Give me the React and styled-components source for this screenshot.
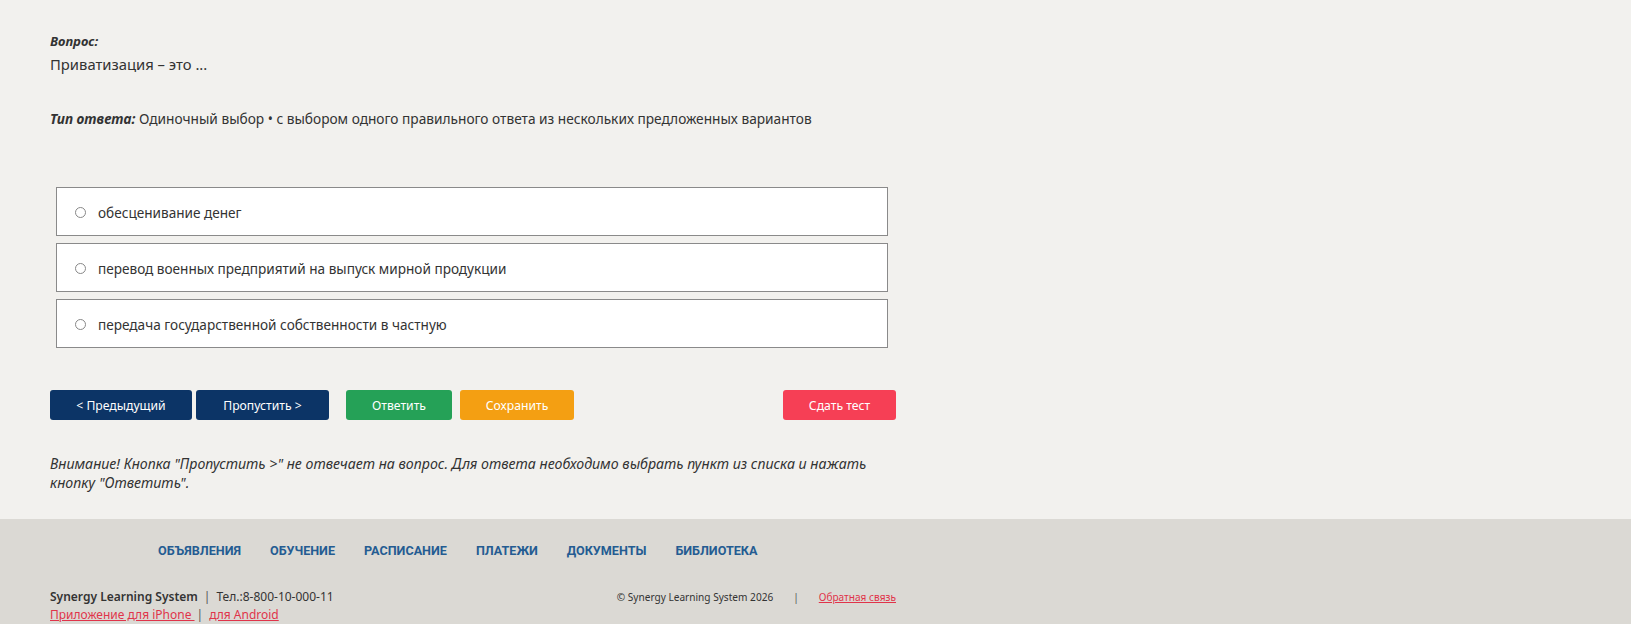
import React from 'react';
import styled, { createGlobalStyle } from 'styled-components';

const GlobalStyle = createGlobalStyle`
    html, body {
        margin: 0;
        padding: 0;
        background: #f2f1ee;
    }
    body {
        font-family: 'Noto Sans', 'Open Sans', sans-serif;
        color: #333;
    }
`;

const Page = styled.div`
    min-height: 624px;
    display: flex;
    flex-direction: column;
`;

const Main = styled.main`
    width: 846px;
    padding: 32px 0 0 50px;
    box-sizing: content-box;
`;

const Label = styled.div`
    font-size: 13px;
    font-weight: 700;
    font-style: italic;
    line-height: 19px;
    color: #333;
`;

const Question = styled.div`
    font-size: 14.8px;
    line-height: 20px;
    margin-top: 3px;
    color: #333;
`;

const AnswerType = styled.div`
    margin-top: 35px;
    font-size: 13.7px;
    line-height: 20px;
    color: #333;

    b {
        font-weight: 700;
        font-style: italic;
    }
`;

const Options = styled.div`
    margin: 58px 8px 0 6px;
    display: flex;
    flex-direction: column;
    gap: 7px;
`;

const Option = styled.label`
    display: flex;
    align-items: center;
    gap: 12px;
    height: 45px;
    padding: 2px 18px 0;
    box-sizing: content-box;
    background: #fff;
    border: 1px solid #8a8a8a;
    font-size: 13.6px;
    color: #333;
    cursor: pointer;
`;

const Radio = styled.span`
    width: 9px;
    height: 9px;
    border-radius: 50%;
    border: 1px solid #888;
    background: #fff;
    flex-shrink: 0;
`;

const Toolbar = styled.div`
    display: flex;
    align-items: center;
    margin-top: 42px;
`;

const Button = styled.button`
    font-family: 'Noto Sans', 'Open Sans', sans-serif;
    height: 30px;
    width: ${(p) => p.$w}px;
    margin-left: ${(p) => p.$ml || 0}px;
    background: ${(p) => p.$bg};
    color: #fff;
    border: none;
    border-radius: 3px;
    font-size: 12.2px;
    padding: 0;
    cursor: pointer;
`;

const Spacer = styled.div`
    flex: 1;
`;

const Notice = styled.p`
    margin: 34px 0 27px;
    font-size: 14.2px;
    font-style: italic;
    line-height: 19px;
    color: #333;
`;

const Footer = styled.footer`
    flex: 1;
    background: #dbd9d4;
    padding: 0 0 0 50px;
`;

const FooterInner = styled.div`
    width: 846px;
`;

const Nav = styled.nav`
    display: flex;
    gap: 29px;
    padding: 23px 0 0 108px;
    height: 40px;
    box-sizing: border-box;
`;

const NavLink = styled.a`
    font-family: 'Roboto', sans-serif;
    font-weight: 700;
    font-size: 12.6px;
    line-height: 17px;
    color: #245c92;
    text-decoration: none;
`;

const Bottom = styled.div`
    display: flex;
    justify-content: space-between;
    margin-top: 29px;
    font-size: 12px;
    line-height: 18px;
    color: #333;
`;

const Col = styled.div`
    display: flex;
    flex-direction: column;
`;

const Strong = styled.span`
    font-weight: 600;
`;

const Sep = styled.span`
    margin: 0 6px 0 ${(p) => (p.$tight ? 2 : 6)}px;
    color: #555;
`;

const Link = styled.a`
    color: #e0344a;
    text-decoration: underline;
`;

const Copy = styled.div`
    font-size: 10.1px;
    line-height: 18px;
    color: #333;

    ${Sep} {
        margin: 0 20px;
    }
`;

const options = [
    'обесценивание денег',
    'перевод военных предприятий на выпуск мирной продукции',
    'передача государственной собственности в частную',
];

const nav = ['ОБЪЯВЛЕНИЯ', 'ОБУЧЕНИЕ', 'РАСПИСАНИЕ', 'ПЛАТЕЖИ', 'ДОКУМЕНТЫ', 'БИБЛИОТЕКА'];

export default function App() {
    return (
        <Page>
            <GlobalStyle />
            <Main>
                <Label>Вопрос:</Label>
                <Question>Приватизация – это ...</Question>
                <AnswerType>
                    <b>Тип ответа:</b> Одиночный выбор • с выбором одного правильного ответа из
                    нескольких предложенных вариантов
                </AnswerType>
                <Options>
                    {options.map((o) => (
                        <Option key={o}>
                            <Radio />
                            {o}
                        </Option>
                    ))}
                </Options>
                <Toolbar>
                    <Button $bg="#0c3466" $w={142}>&lt; Предыдущий</Button>
                    <Button $bg="#0c3466" $w={133} $ml={4}>Пропустить &gt;</Button>
                    <Button $bg="#25a157" $w={106} $ml={17}>Ответить</Button>
                    <Button $bg="#f49f12" $w={114} $ml={8}>Сохранить</Button>
                    <Spacer />
                    <Button $bg="#f63f55" $w={113}>Сдать тест</Button>
                </Toolbar>
                <Notice>
                    Внимание! Кнопка "Пропустить &gt;" не отвечает на вопрос. Для ответа необходимо
                    выбрать пункт из списка и нажать кнопку "Ответить".
                </Notice>
            </Main>
            <Footer>
                <FooterInner>
                    <Nav>
                        {nav.map((n) => (
                            <NavLink key={n} href="#">{n}</NavLink>
                        ))}
                    </Nav>
                    <Bottom>
                        <Col>
                            <div>
                                <Strong>Synergy Learning System</Strong>
                                <Sep>|</Sep>Тел.:8-800-10-000-11
                            </div>
                            <div>
                                <Link href="#">Приложение для iPhone </Link>
                                <Sep $tight>|</Sep>
                                <Link href="#">для Android</Link>
                            </div>
                        </Col>
                        <Copy>
                            © Synergy Learning System 2026<Sep>|</Sep>
                            <Link href="#">Обратная связь</Link>
                        </Copy>
                    </Bottom>
                </FooterInner>
            </Footer>
        </Page>
    );
}
